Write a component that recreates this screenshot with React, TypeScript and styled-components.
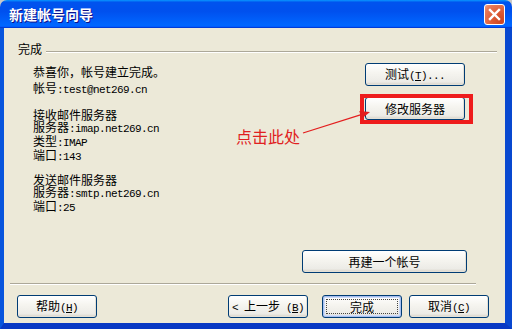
import styled, { createGlobalStyle } from 'styled-components';

const GlobalStyle = createGlobalStyle`
   html, body {
      margin: 0;
      padding: 0;
   }
   body {
      width: 512px;
      height: 329px;
      overflow: hidden;
      background: #c8c8c8;
      font-family: "Noto Sans CJK SC", "Liberation Sans", sans-serif;
      font-size: 12px;
      color: #000;
   }
`;

function App() {
   return (
      <>
         <GlobalStyle />
         <Window>
            <TitleBar>
               <Title>新建帐号向导</Title>
               <CloseButton aria-label="关闭">
                  <svg width="13" height="13" viewBox="0 0 13 13">
                     <path d="M2 2 L11 11 M11 2 L2 11" stroke="#fff" strokeWidth="2.4" strokeLinecap="square" />
                  </svg>
               </CloseButton>
            </TitleBar>
            <Frame>
               <Body>
                  <GroupHeader>
                     <span>完成</span>
                     <GroupLine />
                  </GroupHeader>
                  <Main>
                     <TextColumn>
                        <Block $lh={16} $top={1}>
                           <div>恭喜你，帐号建立完成。</div>
                           <div>
                              帐号<Latin>:test@net269.cn</Latin>
                           </div>
                        </Block>
                        <Block $lh={12} $top={11}>
                           <div>接收邮件服务器</div>
                           <div>
                              服务器<Latin>:imap.net269.cn</Latin>
                           </div>
                           <div>
                              类型<Latin>:IMAP</Latin>
                           </div>
                           <div>
                              端口<Latin>:143</Latin>
                           </div>
                        </Block>
                        <Block $lh={12} $top={11}>
                           <div>发送邮件服务器</div>
                           <div>
                              服务器<Latin>:smtp.net269.cn</Latin>
                           </div>
                           <div>
                              端口<Latin>:25</Latin>
                           </div>
                        </Block>
                     </TextColumn>
                     <ButtonColumn>
                        <Button $width={100}>
                           测试<Latin>
                              (<u>T</u>)...
                           </Latin>
                        </Button>
                        <Button $width={100}>修改服务器</Button>
                     </ButtonColumn>
                  </Main>
                  <AccountRow>
                     <Button $width={165}>再建一个帐号</Button>
                  </AccountRow>
                  <Separator />
                  <Footer>
                     <Button $width={80}>
                        帮助<Latin>
                           (<u>H</u>)
                        </Latin>
                     </Button>
                     <Button $width={80} $push>
                        <Latin>&lt; </Latin>上一步<Latin>
                           {' '}(<u>B</u>)
                        </Latin>
                     </Button>
                     <Button $width={80} $default>
                        完成
                        <FocusRing />
                     </Button>
                     <Button $width={80}>
                        取消<Latin>
                           (<u>C</u>)
                        </Latin>
                     </Button>
                  </Footer>
               </Body>
            </Frame>

            {/* annotation drawn over the dialog */}
            <HighlightBox />
            <HintText>点击此处</HintText>
            <Arrow width="75" height="32" viewBox="0 0 75 32">
               <line x1="3" y1="28" x2="60.4" y2="9.9" stroke="#e31e1e" strokeWidth="1.2" />
               <polygon points="70,7 61.6,13.8 59.3,6.1" fill="#e31e1e" />
            </Arrow>
         </Window>
      </>
   );
}

export default App;

const Window = styled.div`
   position: relative;
   width: 512px;
   height: 329px;
   display: flex;
   flex-direction: column;
`;

const TitleBar = styled.div`
   height: 28px;
   flex-shrink: 0;
   display: flex;
   align-items: center;
   justify-content: space-between;
   padding: 0 7px 0 9px;
   border-radius: 7px 7px 0 0;
   background: linear-gradient(
      180deg,
      #0997ff 0%,
      #0053ee 8%,
      #0050ee 40%,
      #0066ff 88%,
      #0066ff 93%,
      #005bff 95%,
      #003dd7 96%,
      #003dd7 100%
   );
`;

const Title = styled.span`
   color: #fff;
   font-weight: bold;
   font-size: 14px;
   line-height: 16px;
   text-shadow: 1px 1px #0f1089;
`;

const CloseButton = styled.button`
   width: 21px;
   height: 21px;
   padding: 0;
   display: flex;
   align-items: center;
   justify-content: center;
   border: 1px solid #fff;
   border-radius: 3px;
   background: radial-gradient(circle at 85% 85%, #cc4622 0%, #dc5a34 40%, #e87a58 80%, #f2a185 100%);
`;

const Frame = styled.div`
   flex: 1;
   display: flex;
   border-left: 4px solid #0855dd;
   border-right: 7px solid #0848d0;
   border-bottom: 6px solid #0838c4;
`;

const Body = styled.div`
   flex: 1;
   display: flex;
   flex-direction: column;
   background: #ece9d8;
   padding: 15px 0 5px 0;
`;

const GroupHeader = styled.div`
   display: flex;
   margin: 0 8px 0 14px;
   height: 12px;
   line-height: 12px;
`;

const GroupLine = styled.div`
   flex: 1;
   margin: 8px 0 0 4px;
   height: 0;
   border-top: 1px solid #aca899;
   border-bottom: 1px solid #fff;
`;

const Main = styled.div`
   flex: 1;
   display: flex;
   justify-content: space-between;
   margin-top: 8px;
`;

const TextColumn = styled.div`
   padding-left: 29px;
`;

const Block = styled.div<{ $lh: number; $top: number }>`
   line-height: ${(p) => p.$lh}px;
   margin-top: ${(p) => p.$top}px;
   white-space: nowrap;
`;

const Latin = styled.span`
   font-family: "Liberation Mono", "DejaVu Sans Mono", monospace;
   font-size: 11px;
   letter-spacing: -0.6px;
   white-space: pre;
`;

const ButtonColumn = styled.div`
   display: flex;
   flex-direction: column;
   gap: 11px;
   margin-right: 40px;
`;

const Button = styled.button<{ $width: number; $default?: boolean; $push?: boolean }>`
   position: relative;
   width: ${(p) => p.$width}px;
   height: 23px;
   padding: 0;
   margin-left: ${(p) => (p.$push ? 'auto' : '0')};
   font-family: "Noto Sans CJK SC", sans-serif;
   font-size: 12px;
   line-height: 12px;
   color: #000;
   border: 1px solid #003c74;
   border-radius: 3px;
   background: linear-gradient(180deg, #ffffff 0%, #f6f5f0 40%, #ecebe6 85%, #d6d0c5 100%);
   box-shadow: ${(p) =>
      p.$default
         ? 'inset 0 0 0 1px #a8c0f0, inset 0 0 0 2px #cedcf8'
         : 'inset -1px -1px 0 #e3e0d6'};
`;

const FocusRing = styled.span`
   position: absolute;
   inset: 3px;
   border: 1px dotted #444;
   pointer-events: none;
`;

const AccountRow = styled.div`
   display: flex;
   justify-content: flex-end;
   padding-right: 38px;
`;

const Separator = styled.div`
   margin: 10px 29px 0 6px;
   height: 0;
   border-top: 1px solid #aca899;
   border-bottom: 1px solid #fff;
`;

const Footer = styled.div`
   display: flex;
   margin-top: 10px;
   padding: 0 16px 0 13px;
   & > button:nth-child(3) {
      margin-left: 14px;
   }
   & > button:nth-child(4) {
      margin-left: 7px;
   }
`;

const HighlightBox = styled.div`
   position: absolute;
   left: 360px;
   top: 94px;
   width: 113px;
   height: 30px;
   box-sizing: border-box;
   border: 4px solid #ee1c1c;
   pointer-events: none;
`;

const HintText = styled.div`
   position: absolute;
   left: 236px;
   top: 128px;
   font-size: 16px;
   line-height: 16px;
   color: #e02020;
   white-space: nowrap;
`;

const Arrow = styled.svg`
   position: absolute;
   left: 300px;
   top: 105px;
`;
